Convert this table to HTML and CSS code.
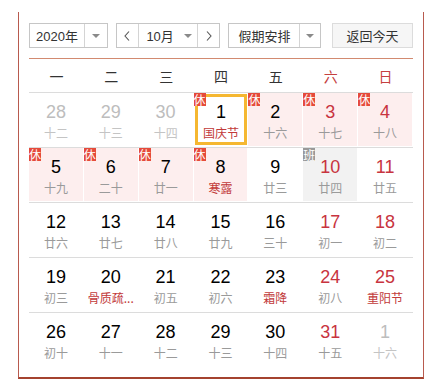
FILE: index.html
```html
<!DOCTYPE html>
<html lang="zh">
<head>
<meta charset="utf-8">
<title>万年历</title>
<link rel="stylesheet" href="styles.css">
</head>
<body>
<div class="cal">
  <div class="toolbar">
    <div class="sel year"><span class="lbl">2020年</span><span class="arr"><i class="tri"></i></span></div>
    <div class="sel month">
      <span class="nav"><svg width="6" height="10" viewBox="0 0 6 10"><path d="M5 0.5 L1 5 L5 9.5" fill="none" stroke="#555" stroke-width="1.1"/></svg></span>
      <span class="mlbl">10月<i class="tri"></i></span>
      <span class="nav"><svg width="6" height="10" viewBox="0 0 6 10"><path d="M1 0.5 L5 5 L1 9.5" fill="none" stroke="#555" stroke-width="1.1"/></svg></span>
    </div>
    <div class="sel holi"><span class="lbl">假期安排</span><span class="arr"><i class="tri"></i></span></div>
    <div class="btn">返回今天</div>
  </div>
  <div class="week">
    <span>一</span><span>二</span><span>三</span><span>四</span><span>五</span><span class="we">六</span><span class="we">日</span>
  </div>
  <div class="grid">
    <div class="cell"><div class="day other"><b>28</b><em>十二</em></div></div>
    <div class="cell"><div class="day other"><b>29</b><em>十三</em></div></div>
    <div class="cell"><div class="day other"><b>30</b><em>十四</em></div></div>
    <div class="cell"><div class="day cur"><b>1</b><em class="fest">国庆节</em></div><span class="tag">休</span></div>
    <div class="cell"><div class="day rest"><b>2</b><em>十六</em></div><span class="tag">休</span></div>
    <div class="cell"><div class="day rest red"><b>3</b><em>十七</em></div><span class="tag">休</span></div>
    <div class="cell"><div class="day rest red"><b>4</b><em>十八</em></div><span class="tag">休</span></div>

    <div class="cell"><div class="day rest"><b>5</b><em>十九</em></div><span class="tag">休</span></div>
    <div class="cell"><div class="day rest"><b>6</b><em>二十</em></div><span class="tag">休</span></div>
    <div class="cell"><div class="day rest"><b>7</b><em>廿一</em></div><span class="tag">休</span></div>
    <div class="cell"><div class="day rest"><b>8</b><em class="fest">寒露</em></div><span class="tag">休</span></div>
    <div class="cell"><div class="day"><b>9</b><em>廿三</em></div></div>
    <div class="cell"><div class="day work red"><b>10</b><em>廿四</em></div><span class="tag ban">班</span></div>
    <div class="cell"><div class="day red"><b>11</b><em>廿五</em></div></div>

    <div class="cell"><div class="day"><b>12</b><em>廿六</em></div></div>
    <div class="cell"><div class="day"><b>13</b><em>廿七</em></div></div>
    <div class="cell"><div class="day"><b>14</b><em>廿八</em></div></div>
    <div class="cell"><div class="day"><b>15</b><em>廿九</em></div></div>
    <div class="cell"><div class="day"><b>16</b><em>三十</em></div></div>
    <div class="cell"><div class="day red"><b>17</b><em>初一</em></div></div>
    <div class="cell"><div class="day red"><b>18</b><em>初二</em></div></div>

    <div class="cell"><div class="day"><b>19</b><em>初三</em></div></div>
    <div class="cell"><div class="day"><b>20</b><em class="fest">骨质疏...</em></div></div>
    <div class="cell"><div class="day"><b>21</b><em>初五</em></div></div>
    <div class="cell"><div class="day"><b>22</b><em>初六</em></div></div>
    <div class="cell"><div class="day"><b>23</b><em class="fest">霜降</em></div></div>
    <div class="cell"><div class="day red"><b>24</b><em>初八</em></div></div>
    <div class="cell"><div class="day red"><b>25</b><em class="fest">重阳节</em></div></div>

    <div class="cell"><div class="day"><b>26</b><em>初十</em></div></div>
    <div class="cell"><div class="day"><b>27</b><em>十一</em></div></div>
    <div class="cell"><div class="day"><b>28</b><em>十二</em></div></div>
    <div class="cell"><div class="day"><b>29</b><em>十三</em></div></div>
    <div class="cell"><div class="day"><b>30</b><em>十四</em></div></div>
    <div class="cell"><div class="day red"><b>31</b><em>十五</em></div></div>
    <div class="cell"><div class="day other"><b>1</b><em>十六</em></div></div>
  </div>
</div>
</body>
</html>
```
FILE: styles.css
```css
html, body { margin: 0; padding: 0; background: #fff; }
body {
  font-family: "Noto Sans CJK SC", "Liberation Sans", sans-serif;
  color: #333;
}
.cal {
  margin: 12px 0 0 18px;
  width: 384px;
  padding: 11px 10px 10px 10px;
  border-left: 1px solid #b85a4e;
  border-right: 1px solid #b85a4e;
  border-bottom: 2px solid #a4432f;
}
.toolbar {
  display: flex;
  align-items: stretch;
  height: 25px;
}
.sel {
  display: flex;
  border: 1px solid #c6c6c6;
  box-sizing: border-box;
  height: 25px;
  background: #fff;
  font-size: 13px;
  color: #333;
}
.lbl {
  display: flex;
  align-items: center;
  justify-content: center;
  font-family: "Liberation Sans", "Noto Sans CJK SC", sans-serif;
}
.year { width: 79px; }
.year .lbl { width: 54px; }
.arr {
  flex: 1;
  display: flex;
  align-items: center;
  justify-content: center;
  border-left: 1px solid #d4d4d4;
}
.tri {
  display: inline-block;
  width: 0;
  height: 0;
  border-left: 4px solid transparent;
  border-right: 4px solid transparent;
  border-top: 4px solid #8a8a8a;
}
.month { margin-left: 8px; width: 105px; }
.nav {
  width: 21px;
  display: flex;
  align-items: center;
  justify-content: center;
}
.nav:first-child { border-right: 1px solid #d4d4d4; }
.nav:last-child { border-left: 1px solid #d4d4d4; }
.mlbl {
  flex: 1;
  display: flex;
  align-items: center;
  justify-content: center;
  gap: 10px;
  font-family: "Liberation Sans", "Noto Sans CJK SC", sans-serif;
  padding-left: 2px;
}
.holi { margin-left: 8px; width: 93px; }
.holi .lbl { width: 70px; }
.btn {
  margin-left: 11px;
  width: 81px;
  box-sizing: border-box;
  height: 25px;
  border: 1px solid #dcdcdc;
  background: #f6f6f6;
  display: flex;
  align-items: center;
  justify-content: center;
  font-size: 13px;
  color: #333;
}
.week {
  margin-top: 10px;
  border-top: 1px solid #d28a70;
  display: grid;
  grid-template-columns: repeat(7, 1fr);
  height: 33px;
  align-items: center;
  text-align: center;
  font-size: 14px;
  color: #333;
}
.week .we { color: #c5403f; }
.grid {
  display: grid;
  grid-template-columns: repeat(7, 1fr);
}
.cell {
  position: relative;
  height: 55px;
  box-sizing: border-box;
  border-top: 1px solid #dcdcdc;
  padding: 0 1px 1px 0;
}
.day {
  height: 100%;
  box-sizing: border-box;
  text-align: center;
  padding-top: 8px;
}
.day b {
  display: block;
  font-weight: normal;
  font-family: "Liberation Sans", Arial, sans-serif;
  font-size: 18px;
  line-height: 22px;
  color: #000;
}
.day em {
  display: block;
  font-style: normal;
  font-size: 12px;
  line-height: 16px;
  margin-top: 2px;
  color: #9a9a9a;
  white-space: nowrap;
}
.day.red b { color: #c8343f; }
.day em.fest { color: #c23a3a; }
.day.other b { color: #bdbdbd; }
.day.other em { color: #c4c4c4; }
.day.rest { background: #fdeeee; }
.day.work { background: #f2f2f2; }
.day.cur {
  margin: 1px 0 1px 1px;
  height: 51px;
  border: 3px solid #f5b731;
  padding-top: 4px;
  background: #fff;
}
.tag {
  position: absolute;
  top: 0;
  left: 0;
  width: 12px;
  height: 13px;
  background: #e54a3b;
  color: #fff;
  font-size: 12px;
  line-height: 13px;
  text-align: center;
}
.tag.ban { background: #999; }
```
